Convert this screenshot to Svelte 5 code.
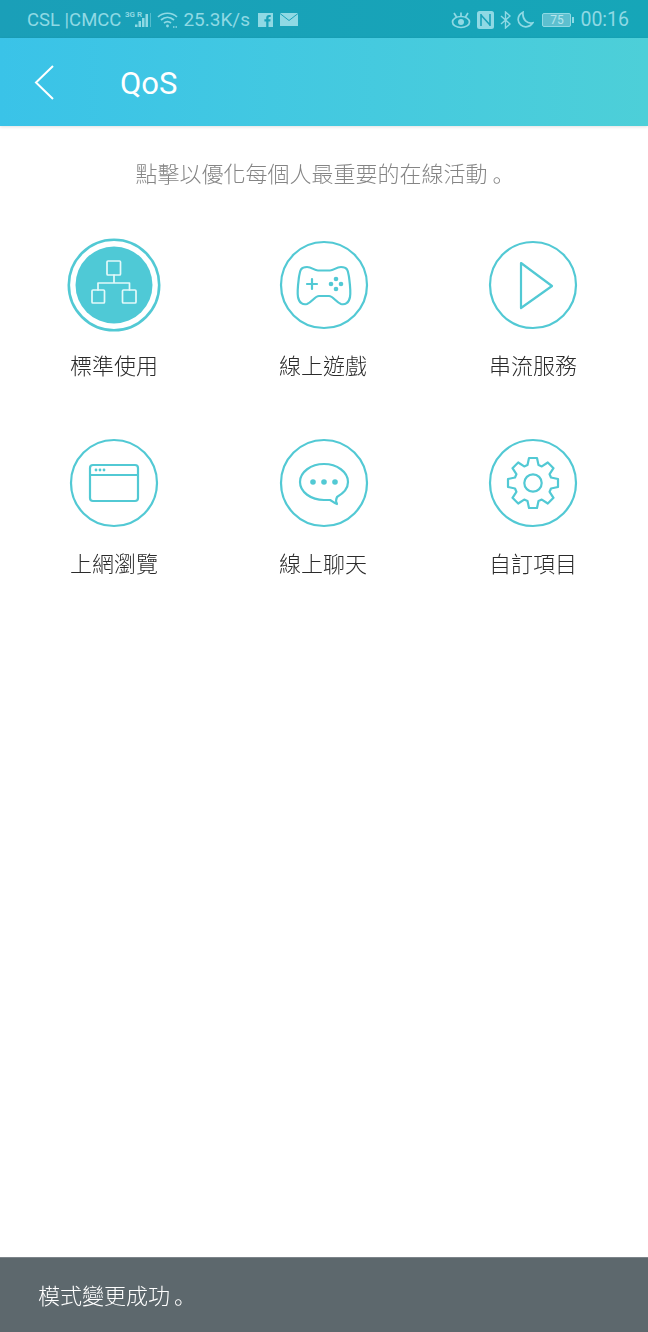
<script>
  const gearPath = (() => {
    const pts = [];
    for (let i = 0; i < 8; i++) {
      const a = (i * 45 - 90) * Math.PI / 180;
      const pt = (along, across) => {
        const x = along * Math.cos(a) - across * Math.sin(a);
        const y = along * Math.sin(a) + across * Math.cos(a);
        return x.toFixed(1) + ',' + y.toFixed(1);
      };
      pts.push(pt(18, -5.5), pt(25, -4), pt(25, 4), pt(18, 5.5));
    }
    return 'M' + pts.join(' L') + ' Z';
  })();

  const modes = [
    { id: 'standard', label: '標準使用' },
    { id: 'game', label: '線上遊戲' },
    { id: 'stream', label: '串流服務' },
    { id: 'browse', label: '上網瀏覽' },
    { id: 'chat', label: '線上聊天' },
    { id: 'custom', label: '自訂項目' }
  ];
</script>

<div class="screen">
  <div class="status">
    <div class="group left">
      <span class="carrier">CSL |CMCC</span>
      <svg class="signal" width="28" height="20" viewBox="0 0 28 20">
        <text x="0" y="7" class="tiny">3G R</text>
        <rect x="10" y="14.500" width="2.500" height="2.500" /><rect x="13.500" y="11" width="2.500" height="6" />
        <rect x="17" y="8" width="2.500" height="9" /><rect x="20.500" y="4" width="2.500" height="13" />
        <rect x="25" y="3" width="1" height="14" opacity="0.5" />
      </svg>
      <svg class="wifi" width="22" height="18" viewBox="0 0 22 18" fill="none" stroke="currentColor" stroke-width="1.7">
        <path d="M1 6 C6 1 15 1 20 6" /><path d="M4 9 C8 5.5 13 5.5 17 9" /><path d="M7 12 C9 10.5 12 10.5 14 12" />
        <circle cx="10.5" cy="15" r="1.4" fill="currentColor" stroke="none" />
        <path d="M16 16 h4" stroke-width="1.5" stroke-dasharray="1.5 1" />
      </svg>
      <span class="speed">25.3K/s</span>
      <svg class="fb" width="15" height="14" viewBox="0 0 15 14">
        <path fill="currentColor" fill-rule="evenodd" d="M0 0H15V14H0Z M10.5 14V8.5H12.3L12.6 6.3H10.5V5C10.5 4.3 10.8 3.9 11.6 3.9H12.7V2C12.3 2 11.7 1.9 11 1.9C9.3 1.9 8.2 2.9 8.2 4.8V6.3H6.4V8.5H8.2V14Z" />
      </svg>
      <svg class="mail" width="18" height="13" viewBox="0 0 18 13">
        <rect width="18" height="13" fill="currentColor" />
        <path d="M0 0.5 L9 7.5 L18 0.5" fill="none" stroke="#1aa3b9" stroke-width="1" />
      </svg>
    </div>
    <div class="group right">
      <svg width="20" height="18" viewBox="0 0 20 18" fill="none" stroke="currentColor" stroke-width="1.7">
        <ellipse cx="10" cy="11" rx="8.5" ry="5.5" /><circle cx="10" cy="11" r="3" fill="currentColor" stroke="none" />
        <path d="M3 2 L5.5 6 M10 1.5 V5 M17 2 L14.5 6" />
      </svg>
      <svg width="17" height="18" viewBox="0 0 17 18">
        <rect width="17" height="18" rx="2.5" fill="currentColor" />
        <path d="M4 15 V3 M13 15 V3 M4 4 L13 14" fill="none" stroke="#1aa3b9" stroke-width="1.6" />
      </svg>
      <svg width="11" height="18" viewBox="0 0 11 18" fill="none" stroke="currentColor" stroke-width="1.4">
        <path d="M1 5 L10 13 L5.5 17 V1 L10 5 L1 13" />
      </svg>
      <svg width="17" height="17" viewBox="0 0 17 17" fill="none" stroke="currentColor" stroke-width="1.7">
        <path d="M6 1.2 C2.5 3 1 6 1.2 9 C1.5 13 5 16 9 15.8 C12 15.7 14.5 14 15.8 11.8 C10.5 13 5 9 6 1.2 Z" />
      </svg>
      <div class="battery">
        <div class="cell">75</div>
        <div class="nub"></div>
      </div>
      <span class="time">00:16</span>
    </div>
  </div>

  <header class="bar">
    <svg class="back" width="20" height="35" viewBox="0 0 20 35" fill="none" stroke="#fff" stroke-width="2">
      <path d="M19 1 L2 17.5 L19 34" />
    </svg>
    <h1>QoS</h1>
  </header>

  <main>
    <p class="hint">點擊以優化每個人最重要的在線活動<span class="punct">。</span></p>
    <div class="grid">
      {#each modes as mode}
        <div class="mode">
          <svg class="icon" width="94" height="94" viewBox="-47 -47 94 94" fill="none" stroke="#52c9d4" stroke-width="2.2" stroke-linejoin="round" stroke-linecap="round">
            {#if mode.id === 'standard'}
              <circle r="45.2" stroke-width="2.6" />
              <circle r="38.5" fill="#4fc9d6" stroke="none" />
              <g stroke="#e4f9fa" stroke-width="1.7">
                <rect x="-7" y="-24" width="13.5" height="14" rx="1" />
                <rect x="-22" y="5" width="12.5" height="13" rx="1" />
                <rect x="8.5" y="5" width="13.5" height="13" rx="1" />
                <path d="M0 -10 V-2 M-16 5 V-2 H15.5 V5" />
              </g>
            {:else}
              <circle r="43" />
            {/if}
            {#if mode.id === 'game'}
              <path d="M-17,-18 C-24,-18 -24,-14 -25,-8 C-26,0 -27,6 -26,12 C-25,18 -21,20 -17,19 C-12,17 -9,11 -5,11 L5,11 C9,11 12,17 17,19 C21,20 25,18 26,12 C27,6 26,0 25,-8 C24,-14 24,-18 17,-18 C12,-18 10,-14.5 6,-14.5 L-6,-14.5 C-10,-14.5 -12,-18 -17,-18 Z" />
              <path d="M-17,-1 H-7 M-12,-6 V4" />
              <g fill="#52c9d4" stroke="none">
                <circle cx="12" cy="-6" r="2.3" /><circle cx="7" cy="-1" r="2.3" />
                <circle cx="17" cy="-1" r="2.3" /><circle cx="12" cy="4" r="2.3" />
              </g>
            {:else if mode.id === 'stream'}
              <path d="M-12,-22 L19,1 L-12,23 Z" />
            {:else if mode.id === 'browse'}
              <rect x="-24" y="-18" width="48" height="36" rx="3" />
              <path d="M-24,-8 H24" />
              <g fill="#52c9d4" stroke="none">
                <circle cx="-18" cy="-13" r="1.4" /><circle cx="-14" cy="-13" r="1.4" /><circle cx="-10" cy="-13" r="1.4" />
              </g>
            {:else if mode.id === 'chat'}
              <path d="M13,21 C12,19 12,16 13,14 C20,10 24,5 24,-1 C24,-11 13,-19 0,-19 C-13,-19 -24,-11 -24,-1 C-24,9 -13,17 0,17 C3,17 4,17 6,17 C8,18 10,20 13,21 Z" />
              <g fill="#52c9d4" stroke="none">
                <circle cx="-11" cy="-1" r="2.8" /><circle cy="-1" r="2.8" /><circle cx="11" cy="-1" r="2.8" />
              </g>
            {:else if mode.id === 'custom'}
              <path d={gearPath} />
              <circle r="8.7" />
            {/if}
          </svg>
          <span class="label">{mode.label}</span>
        </div>
      {/each}
    </div>
  </main>

  <div class="toast"><span>模式變更成功<span class="punct">。</span></span></div>
</div>

<style>
  :global(body) {
    margin: 0;
    background: #fff;
  }
  .screen {
    height: 1332px;
    display: flex;
    flex-direction: column;
    overflow: hidden;
    font-family: Roboto, "Noto Sans CJK TC", sans-serif;
  }
  .status {
    height: 38px;
    flex: none;
    display: flex;
    align-items: center;
    justify-content: space-between;
    box-sizing: border-box;
    padding: 1px 19px 0 27px;
    background: linear-gradient(90deg, #1a9fb8, #16a6b8);
    color: #8fd9e4;
    font-size: 18.5px;
  }
  .group {
    display: flex;
    align-items: center;
  }
  .group svg {
    display: block;
  }
  .signal {
    fill: currentColor;
    margin-left: 4px;
  }
  .tiny {
    font-size: 8px;
    font-weight: 700;
  }
  .wifi {
    margin-left: 4px;
  }
  .speed {
    margin-left: 4px;
    font-size: 19px;
  }
  .fb {
    margin-left: 8px;
  }
  .mail {
    margin-left: 7px;
  }
  .right {
    gap: 6px;
  }
  .time {
    font-size: 19.5px;
  }
  .battery {
    display: flex;
    align-items: center;
    margin-left: 2px;
  }
  .cell {
    width: 29px;
    height: 14px;
    box-sizing: border-box;
    border: 1px solid #8fd9e4;
    border-radius: 2px;
    background: #5dbfcf;
    color: #b5e6ed;
    font-size: 12px;
    line-height: 12px;
    text-align: center;
  }
  .nub {
    width: 2px;
    height: 6px;
    margin-left: 1px;
    background: #8fd9e4;
  }
  .bar {
    height: 88px;
    flex: none;
    display: flex;
    align-items: center;
    box-sizing: border-box;
    padding-left: 34px;
    background: linear-gradient(90deg, #3ac3e8, #4dcfd8);
    box-shadow: 0 1px 3px rgba(0, 0, 0, 0.12);
    position: relative;
  }
  .back {
    display: block;
  }
  h1 {
    margin: 2px 0 0 66px;
    color: #fff;
    font-size: 31px;
    font-weight: 400;
  }
  main {
    flex: 1;
    padding-top: 31px;
  }
  .hint {
    margin: 0;
    padding-right: 3px;
    color: #858585;
    font-size: 22px;
    line-height: 30px;
    text-align: center;
    font-family: "Noto Sans CJK TC", sans-serif;
    font-weight: 300;
    will-change: transform;
  }
  .hint .punct {
    position: relative;
    left: 5px;
  }
  .punct {
    font-family: "Noto Sans CJK SC", sans-serif;
  }
  .grid {
    display: grid;
    grid-template-columns: repeat(3, 209.5px);
    row-gap: 57px;
    margin-top: 51px;
    padding-left: 9.5px;
  }
  .mode {
    display: flex;
    flex-direction: column;
    align-items: center;
  }
  .icon {
    display: block;
  }
  .label {
    margin: 17px 1px 0 0;
    color: #2b2b2b;
    font-size: 22px;
    line-height: 30px;
    font-family: "Noto Sans CJK TC", sans-serif;
    font-weight: 300;
    will-change: transform;
  }
  .toast {
    height: 75px;
    flex: none;
    display: flex;
    align-items: center;
    box-sizing: border-box;
    padding: 0 0 2px 38px;
    background: #5d686d;
    border-top: 1px solid #7d858a;
    color: #fff;
    font-size: 22px;
    font-family: "Noto Sans CJK TC", sans-serif;
    font-weight: 300;
    will-change: transform;
  }
  .toast .punct {
    position: relative;
    left: 4px;
  }
</style>
